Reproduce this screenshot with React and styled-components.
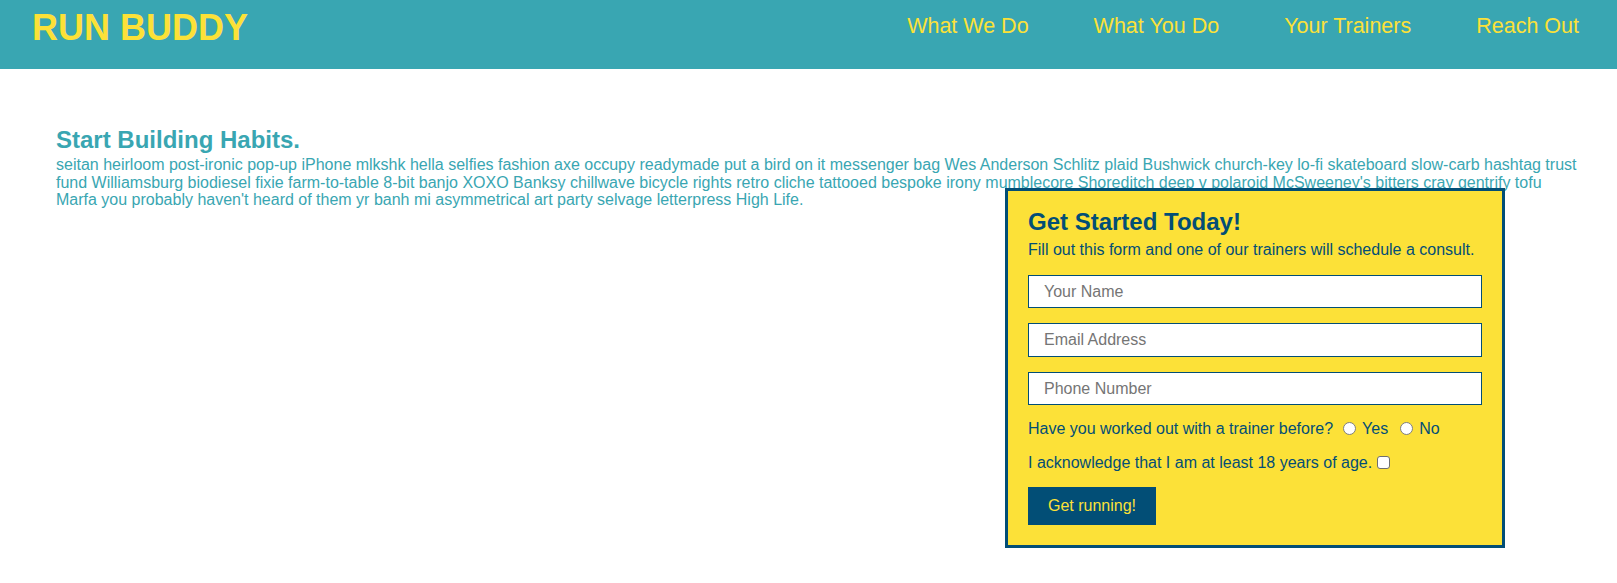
import React from "react";
import styled, { createGlobalStyle } from "styled-components";

const GlobalStyle = createGlobalStyle`
  body {
    margin: 0;
    background: #ffffff;
    font-family: "Liberation Sans", Arial, Helvetica, sans-serif;
  }
`

const Header = styled.header`
  display: flex;
  justify-content: space-between;
  align-items: flex-start;
  height: 69px;
  padding: 0 38px 0 32px;
  background-color: #39a6b2;
  box-sizing: border-box;
`

const Logo = styled.h1`
  margin: 7px 0 0 0;
  font-size: 36px;
  line-height: 41px;
  font-weight: bold;
  color: #fce138;
`

const Nav = styled.ul`
  display: flex;
  gap: 65px;
  list-style: none;
  margin: 0;
  padding: 14px 0 0 0;
`

const NavLink = styled.a`
  font-size: 21.5px;
  line-height: 25px;
  color: #fce138;
  text-decoration: none;
`

const Hero = styled.section`
  display: flex;
  flex-direction: column;
  padding: 57px 38px 0 56px;
`

const Title = styled.h2`
  margin: 0;
  font-size: 24px;
  line-height: 28px;
  font-weight: bold;
  color: #39a6b2;
`

const Text = styled.p`
  margin: 2px 0 0 0;
  font-size: 16px;
  line-height: 17.5px;
  color: #39a6b2;
`

const FormBox = styled.form`
  display: flex;
  flex-direction: column;
  gap: 15px;
  width: 500px;
  box-sizing: border-box;
  margin: -21px 74px 0 auto;
  padding: 17px 20px 20px 20px;
  background-color: #fce138;
  border: 3px solid #024e76;
  color: #024e76;
`

const FormHead = styled.div`
  margin-bottom: 1px;
`

const FormTitle = styled.h2`
  margin: 0;
  font-size: 24px;
  line-height: 28px;
  font-weight: bold;
`

const FormText = styled.p`
  margin: 5px 0 0 0;
  font-size: 16px;
  line-height: 18.4px;
`

const Input = styled.input`
  height: 33.5px;
  box-sizing: border-box;
  padding: 0 15px;
  border: 1px solid #024e76;
  border-radius: 0;
  background: #ffffff;
  font-family: inherit;
  font-size: 16px;
  color: #333;
  outline: none;

  &::placeholder {
    color: #757575;
  }
`

const Row = styled.div`
  font-size: 16px;
  line-height: 18.4px;
`

const Radio = styled.input`
  appearance: none;
  display: inline-block;
  width: 13px;
  height: 13px;
  margin: 0 6px 0 10px;
  border: 1px solid #7f7f7f;
  border-radius: 50%;
  background: #ffffff;
  box-sizing: border-box;
  vertical-align: -1px;
`

const Check = styled.input`
  appearance: none;
  display: inline-block;
  width: 13px;
  height: 13px;
  margin: 0 0 0 5px;
  border: 1px solid #6f6f6f;
  border-radius: 3px;
  background: #ffffff;
  box-sizing: border-box;
  vertical-align: -1px;
`

const Choice = styled.span`
  margin-right: ${props => props.gap || 0}px;
`

const Button = styled.button`
  align-self: flex-start;
  height: 38px;
  padding: 0 20px;
  border: none;
  background-color: #024e76;
  color: #fce138;
  font-family: inherit;
  font-size: 16px;
`

export default function App() {
  const links = ["What We Do", "What You Do", "Your Trainers", "Reach Out"];

  return (
    <>
      <GlobalStyle />
      <Header>
        <Logo>RUN BUDDY</Logo>
        <Nav>
          {links.map(link => (
            <li key={link}>
              <NavLink href="#">{link}</NavLink>
            </li>
          ))}
        </Nav>
      </Header>

      <Hero>
        <Title>Start Building Habits.</Title>
        <Text>
          seitan heirloom post-ironic pop-up iPhone mlkshk hella selfies fashion axe occupy readymade put a bird on it messenger bag Wes Anderson Schlitz plaid Bushwick church-key lo-fi skateboard slow-carb hashtag trust fund Williamsburg biodiesel fixie farm-to-table 8-bit banjo XOXO Banksy chillwave bicycle rights retro cliche tattooed bespoke irony mumblecore Shoreditch deep v polaroid McSweeney's bitters cray gentrify tofu Marfa you probably haven't heard of them yr banh mi asymmetrical art party selvage letterpress High Life.
        </Text>

        <FormBox onSubmit={e => e.preventDefault()}>
          <FormHead>
            <FormTitle>Get Started Today!</FormTitle>
            <FormText>Fill out this form and one of our trainers will schedule a consult.</FormText>
          </FormHead>
          <Input type="text" placeholder="Your Name" />
          <Input type="text" placeholder="Email Address" />
          <Input type="text" placeholder="Phone Number" />
          <Row>
            Have you worked out with a trainer before?
            <Radio type="radio" name="trainer" />
            <Choice gap={2}>Yes</Choice>
            <Radio type="radio" name="trainer" />
            <Choice>No</Choice>
          </Row>
          <Row>
            I acknowledge that I am at least 18 years of age.
            <Check type="checkbox" />
          </Row>
          <Button type="submit">Get running!</Button>
        </FormBox>
      </Hero>
    </>
  );
}
